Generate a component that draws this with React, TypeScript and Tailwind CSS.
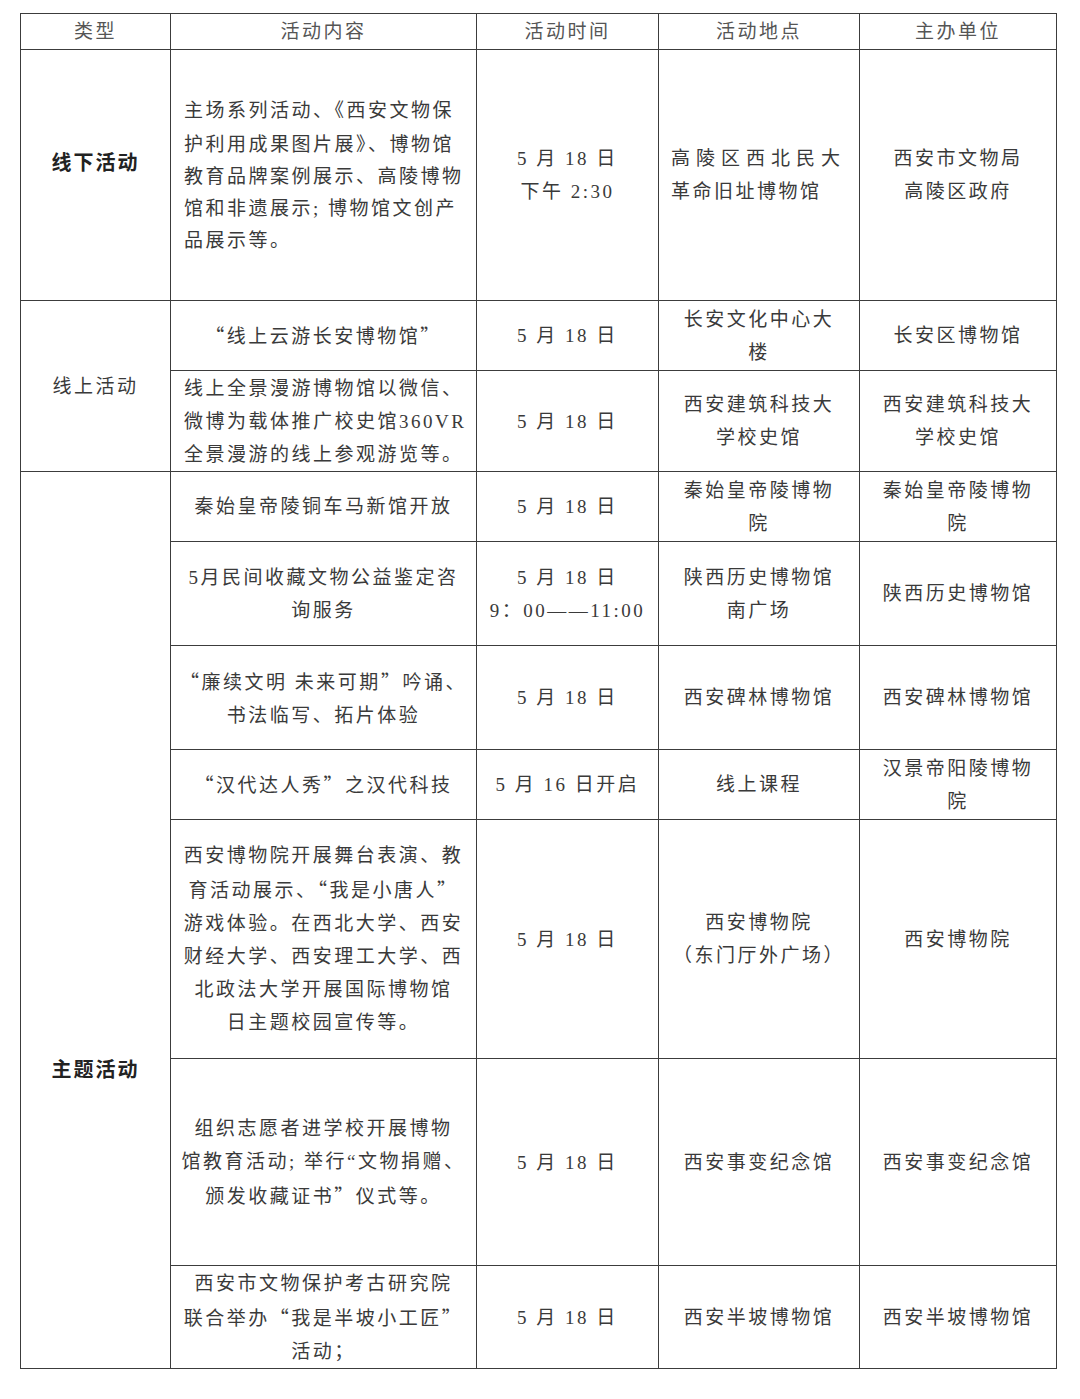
import React from 'react';

const font = { fontFamily: '"Liberation Serif", "Noto Sans CJK SC", serif' };

// full-width quotes come from the CJK face, as in the source document;
// a line starting with "~" keeps the narrow serif quotes
function Line({ text }: { text: string }) {
  const plain = text.startsWith('~');
  const body = plain ? text.slice(1) : text;
  const parts = body.split(plain ? /([《》])/ : /([“”《》])/);
  return (
    <div>
      {parts.map((p, i) =>
        /^[“”《》]$/.test(p) ? (
          <span key={i} className="font-['Noto_Sans_CJK_SC',sans-serif]">
            {p}
          </span>
        ) : (
          <React.Fragment key={i}>{p}</React.Fragment>
        )
      )}
    </div>
  );
}

type CellProps = {
  lines: string[];
  align?: 'center' | 'left';
  lh?: string;
  bold?: boolean;
  rowSpan?: number;
  pad?: string;
};

function Cell({ lines, align = 'center', lh = 'leading-[33px]', bold, rowSpan, pad = '' }: CellProps) {
  return (
    <td
      rowSpan={rowSpan}
      className={`border border-[#3c3c3c] align-middle p-0 ${align === 'left' ? 'text-left pl-[13px]' : 'text-center'} ${pad}`}
    >
      <div className={`${lh} whitespace-nowrap ${bold ? 'font-bold text-[#222] tracking-[2px] text-[20px]' : ''}`}>
        {lines.map((l, i) => (
          <Line key={i} text={l} />
        ))}
      </div>
    </td>
  );
}

export default function App() {
  return (
    <div className="w-[1080px] min-h-[1399px] bg-white pt-[13px] pl-[20px]" style={font}>
      <table className="table-fixed border-collapse w-[1036px] text-[19px] tracking-[2.5px] text-[#3a3a3a]">
        <colgroup>
          <col className="w-[150px]" />
          <col className="w-[306px]" />
          <col className="w-[182px]" />
          <col className="w-[201px]" />
          <col className="w-[197px]" />
        </colgroup>
        <tbody>
          <tr className="h-[36px] text-[#555]">
            <Cell lines={['类型']} lh="leading-[34px]" />
            <Cell lines={['活动内容']} lh="leading-[34px]" />
            <Cell lines={['活动时间']} lh="leading-[34px]" />
            <Cell lines={['活动地点']} lh="leading-[34px]" />
            <Cell lines={['主办单位']} lh="leading-[34px]" />
          </tr>

          <tr className="h-[251px]">
            <Cell lines={['线下活动']} bold pad="pb-[24px]" />
            <Cell
              align="left"
              lh="leading-[32px]"
              lines={['主场系列活动、《西安文物保', '护利用成果图片展》、博物馆', '教育品牌案例展示、高陵博物', '馆和非遗展示; 博物馆文创产', '品展示等。']}
            />
            <Cell lines={['5 月 18 日', '下午 2:30']} />
            <td className="border border-[#3c3c3c] align-middle p-0 text-left pl-[12px]">
              <div className="leading-[33px] whitespace-nowrap">
                <div className="tracking-[6px]">高陵区西北民大</div>
                <div>革命旧址博物馆</div>
              </div>
            </td>
            <Cell lines={['西安市文物局', '高陵区政府']} />
          </tr>

          <tr className="h-[70px]">
            <Cell lines={['线上活动']} rowSpan={2} />
            <Cell lines={['“线上云游长安博物馆”']} />
            <Cell lines={['5 月 18 日']} />
            <Cell lines={['长安文化中心大', '楼']} />
            <Cell lines={['长安区博物馆']} />
          </tr>

          <tr className="h-[101px]">
            <Cell
              align="left"
              lines={['线上全景漫游博物馆以微信、', '微博为载体推广校史馆360VR', '全景漫游的线上参观游览等。']}
            />
            <Cell lines={['5 月 18 日']} />
            <Cell lines={['西安建筑科技大', '学校史馆']} />
            <Cell lines={['西安建筑科技大', '学校史馆']} />
          </tr>

          <tr className="h-[70px]">
            <Cell lines={['主题活动']} bold rowSpan={7} pad="pt-[300px]" />
            <Cell lines={['秦始皇帝陵铜车马新馆开放']} />
            <Cell lines={['5 月 18 日']} />
            <Cell lines={['秦始皇帝陵博物', '院']} />
            <Cell lines={['秦始皇帝陵博物', '院']} />
          </tr>

          <tr className="h-[104px]">
            <Cell lines={['5月民间收藏文物公益鉴定咨', '询服务']} />
            <Cell lines={['5 月 18 日', '9：00——11:00']} />
            <Cell lines={['陕西历史博物馆', '南广场']} />
            <Cell lines={['陕西历史博物馆']} />
          </tr>

          <tr className="h-[104px]">
            <Cell lines={['“廉续文明 未来可期”吟诵、', '书法临写、拓片体验']} />
            <Cell lines={['5 月 18 日']} />
            <Cell lines={['西安碑林博物馆']} />
            <Cell lines={['西安碑林博物馆']} />
          </tr>

          <tr className="h-[70px]">
            <Cell lines={['“汉代达人秀”之汉代科技']} />
            <Cell lines={['5 月 16 日开启']} />
            <Cell lines={['线上课程']} />
            <Cell lines={['汉景帝阳陵博物', '院']} />
          </tr>

          <tr className="h-[239px]">
            <Cell
              lines={['西安博物院开展舞台表演、教', '育活动展示、“我是小唐人”', '游戏体验。在西北大学、西安', '财经大学、西安理工大学、西', '北政法大学开展国际博物馆', '日主题校园宣传等。']}
            />
            <Cell lines={['5 月 18 日']} />
            <Cell lines={['西安博物院', '（东门厅外广场）']} />
            <Cell lines={['西安博物院']} />
          </tr>

          <tr className="h-[207px]">
            <Cell lines={['组织志愿者进学校开展博物', '~馆教育活动; 举行“文物捐赠、', '颁发收藏证书”仪式等。']} />
            <Cell lines={['5 月 18 日']} />
            <Cell lines={['西安事变纪念馆']} />
            <Cell lines={['西安事变纪念馆']} />
          </tr>

          <tr className="h-[103px]">
            <Cell lines={['西安市文物保护考古研究院', '联合举办“我是半坡小工匠”', '活动；']} />
            <Cell lines={['5 月 18 日']} />
            <Cell lines={['西安半坡博物馆']} />
            <Cell lines={['西安半坡博物馆']} />
          </tr>
        </tbody>
      </table>
    </div>
  );
}
